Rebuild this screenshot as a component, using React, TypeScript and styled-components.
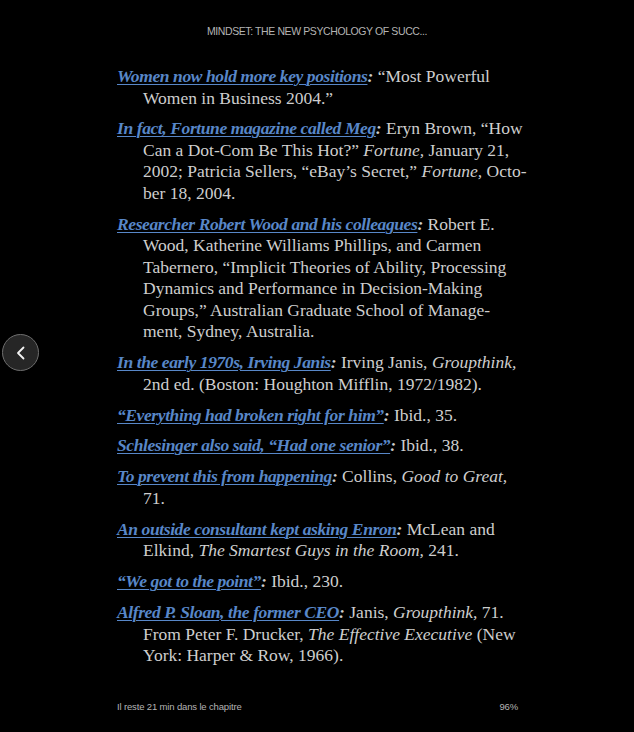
import React from "react";
import styled, { createGlobalStyle } from "styled-components";

const Global = createGlobalStyle`
  html, body { margin: 0; padding: 0; background: #000; }
  body { width: 634px; height: 732px; overflow: hidden; }
`;

const Page = styled.div`
  position: relative;
  width: 634px;
  height: 732px;
  background: #000;
  display: flex;
  flex-direction: column;
`;

const Header = styled.div`
  height: 66px;
  flex-shrink: 0;
  padding-top: 25px;
  box-sizing: border-box;
  text-align: center;
  font-family: "Liberation Sans", Arial, sans-serif;
  font-size: 10.5px;
  color: #b4b4b4;
  letter-spacing: -0.4px;
`;

const Body = styled.div`
  flex: 1;
  padding-left: 117px;
  padding-right: 100px;
  font-family: "Liberation Serif", "Times New Roman", serif;
  font-size: 17.5px;
  line-height: 21.5px;
  color: #cecece;
`;

const Entry = styled.div`
  margin-bottom: 9.4px;
`;

const Line = styled.div<{ $indent?: boolean }>`
  white-space: nowrap;
  padding-left: ${(p) => (p.$indent ? "26px" : "0")};
`;

const Ref = styled.span`
  color: #5887c8;
  font-style: italic;
  font-weight: bold;
  letter-spacing: -0.4px;
  text-decoration: underline;
  text-decoration-thickness: 1px;
  text-underline-offset: 2px;
`;

const Colon = styled.span`
  font-style: italic;
  font-weight: bold;
  color: #cecece;
`;

const Title = styled.i``;

const Footer = styled.div`
  height: 31px;
  flex-shrink: 0;
  display: flex;
  justify-content: space-between;
  padding: 0 116px 0 117px;
  font-family: "Liberation Sans", Arial, sans-serif;
  font-size: 9.5px;
  letter-spacing: -0.15px;
  color: #b4b4b4;
  box-sizing: border-box;
`;

const BackButton = styled.button`
  position: absolute;
  left: 2px;
  top: 334px;
  width: 37px;
  height: 37px;
  border-radius: 50%;
  background: #262626;
  border: 1px solid #6e6e6e;
  display: flex;
  align-items: center;
  justify-content: center;
  padding: 0;
`;

type Seg = string | { i: string };
type Note = { ref: string; lines: Seg[][] };

const notes: Note[] = [
  {
    ref: "Women now hold more key positions",
    lines: [[" \u201CMost Powerful"], ["Women in Business 2004.\u201D"]],
  },
  {
    ref: "In fact, Fortune magazine called Meg",
    lines: [
      [" Eryn Brown, \u201CHow"],
      ["Can a Dot-Com Be This Hot?\u201D ", { i: "Fortune," }, " January 21,"],
      ["2002; Patricia Sellers, \u201CeBay\u2019s Secret,\u201D ", { i: "Fortune," }, " Octo-"],
      ["ber 18, 2004."],
    ],
  },
  {
    ref: "Researcher Robert Wood and his colleagues",
    lines: [
      [" Robert E."],
      ["Wood, Katherine Williams Phillips, and Carmen"],
      ["Tabernero, \u201CImplicit Theories of Ability, Processing"],
      ["Dynamics and Performance in Decision-Making"],
      ["Groups,\u201D Australian Graduate School of Manage-"],
      ["ment, Sydney, Australia."],
    ],
  },
  {
    ref: "In the early 1970s, Irving Janis",
    lines: [
      [" Irving Janis, ", { i: "Groupthink," }],
      ["2nd ed. (Boston: Houghton Mifflin, 1972/1982)."],
    ],
  },
  { ref: "\u201CEverything had broken right for him\u201D", lines: [[" Ibid., 35."]] },
  { ref: "Schlesinger also said, \u201CHad one senior\u201D", lines: [[" Ibid., 38."]] },
  {
    ref: "To prevent this from happening",
    lines: [[" Collins, ", { i: "Good to Great," }], ["71."]],
  },
  {
    ref: "An outside consultant kept asking Enron",
    lines: [[" McLean and"], ["Elkind, ", { i: "The Smartest Guys in the Room," }, " 241."]],
  },
  { ref: "\u201CWe got to the point\u201D", lines: [[" Ibid., 230."]] },
  {
    ref: "Alfred P. Sloan, the former CEO",
    lines: [
      [" Janis, ", { i: "Groupthink," }, " 71."],
      ["From Peter F. Drucker, ", { i: "The Effective Executive" }, " (New"],
      ["York: Harper & Row, 1966)."],
    ],
  },
];

const renderSegs = (segs: Seg[]) =>
  segs.map((s, k) => (typeof s === "string" ? <React.Fragment key={k}>{s}</React.Fragment> : <Title key={k}>{s.i}</Title>));

export default function App() {
  return (
    <Page>
      <Global />
      <Header>MINDSET: THE NEW PSYCHOLOGY OF SUCC...</Header>
      <Body>
        {notes.map((n, idx) => (
          <Entry key={idx}>
            {n.lines.map((l, j) => (
              <Line key={j} $indent={j > 0}>
                {j === 0 && (
                  <>
                    <Ref>{n.ref}</Ref>
                    <Colon>:</Colon>
                  </>
                )}
                {renderSegs(l)}
              </Line>
            ))}
          </Entry>
        ))}
      </Body>
      <Footer>
        <span>Il reste 21 min dans le chapitre</span>
        <span>96%</span>
      </Footer>
      <BackButton aria-label="Back">
        <svg width="16" height="16" viewBox="0 0 16 16" fill="none">
          <path d="M10.5 2.5 L5 8 L10.5 13.5" stroke="#f2f2f2" strokeWidth="1.8" strokeLinecap="round" strokeLinejoin="round" />
        </svg>
      </BackButton>
    </Page>
  );
}
